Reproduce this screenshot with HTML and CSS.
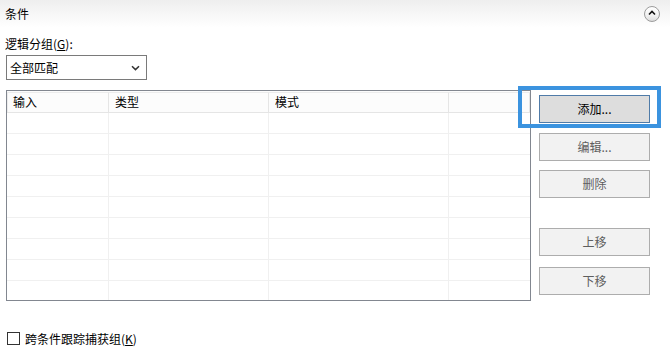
FILE: index.html
```html
<!DOCTYPE html>
<html lang="zh">
<head>
<meta charset="utf-8">
<title>条件</title>
<link rel="stylesheet" href="styles.css">
</head>
<body>
<div class="panel">
  <div class="head">
    <span class="head-title">条件</span>
    <span class="collapse">
      <svg width="8" height="6" viewBox="0 0 8 6"><path d="M1 4.5 L4 1.5 L7 4.5" fill="none" stroke="#111" stroke-width="1.6"/></svg>
    </span>
  </div>
  <div class="content">
    <div class="label">逻辑分组(<u>G</u>):</div>
    <div class="select">
      <span>全部匹配</span>
      <svg class="chev" width="9" height="6" viewBox="0 0 9 6"><path d="M1 1.2 L4.5 4.6 L8 1.2" fill="none" stroke="#333" stroke-width="1.5"/></svg>
    </div>
    <div class="main">
      <div class="grid">
        <div class="row hdr"><div class="cell">输入</div><div class="cell">类型</div><div class="cell">模式</div><div class="cell"></div></div>
        <div class="row"><div class="cell"></div><div class="cell"></div><div class="cell"></div><div class="cell"></div></div>
        <div class="row"><div class="cell"></div><div class="cell"></div><div class="cell"></div><div class="cell"></div></div>
        <div class="row"><div class="cell"></div><div class="cell"></div><div class="cell"></div><div class="cell"></div></div>
        <div class="row"><div class="cell"></div><div class="cell"></div><div class="cell"></div><div class="cell"></div></div>
        <div class="row"><div class="cell"></div><div class="cell"></div><div class="cell"></div><div class="cell"></div></div>
        <div class="row"><div class="cell"></div><div class="cell"></div><div class="cell"></div><div class="cell"></div></div>
        <div class="row"><div class="cell"></div><div class="cell"></div><div class="cell"></div><div class="cell"></div></div>
        <div class="row"><div class="cell"></div><div class="cell"></div><div class="cell"></div><div class="cell"></div></div>
        <div class="row"><div class="cell"></div><div class="cell"></div><div class="cell"></div><div class="cell"></div></div>
      </div>
      <div class="buttons">
        <div class="focus-ring"></div>
        <div class="btn btn-primary">添加...</div>
        <div class="btn gap-a">编辑...</div>
        <div class="btn gap-b">删除</div>
        <div class="btn gap-c">上移</div>
        <div class="btn gap-d">下移</div>
      </div>
    </div>
    <div class="check">
      <span class="box"></span>
      <span>跨条件跟踪捕获组(<u>K</u>)</span>
    </div>
  </div>
</div>
</body>
</html>
```

FILE: styles.css
```css
* { box-sizing: border-box; }
html, body {
  margin: 0;
  padding: 0;
  background: #ffffff;
}
body {
  width: 670px;
  height: 354px;
  overflow: hidden;
  font-family: "Noto Sans CJK SC", "Microsoft YaHei", "Liberation Sans", sans-serif;
  font-size: 12px;
  color: #000;
}
.panel {
  width: 670px;
  height: 354px;
}
.head {
  height: 28px;
  display: flex;
  align-items: center;
  justify-content: space-between;
  padding: 0 10px 0 5px;
  background: linear-gradient(to bottom, #eeeeee 0%, #f7f7f7 50%, #ffffff 100%);
}
.head-title {
  line-height: 16px;
  margin-top: -1px;
}
.collapse {
  width: 16px;
  height: 16px;
  border-radius: 50%;
  border: 1px solid #9c9c9c;
  background: linear-gradient(to bottom, #ffffff 0%, #f1f1f1 60%, #dcdcdc 100%);
  display: flex;
  align-items: center;
  justify-content: center;
  margin-top: -1px;
}
.collapse svg { margin-top: -1px; }
.content {
  padding: 8px 0 0 0;
}
.label {
  padding-left: 5px;
  line-height: 16px;
  height: 16px;
}
.select {
  margin: 3px 0 0 6px;
  width: 141px;
  height: 25px;
  border: 1px solid #7a7a7a;
  display: flex;
  align-items: center;
  justify-content: space-between;
  padding: 0 6px 0 3px;
  line-height: 16px;
}
.select .chev { margin-top: 1px; }
.main {
  margin-top: 10px;
  display: flex;
  align-items: flex-start;
}
.grid {
  margin-left: 6px;
  width: 525px;
  height: 211px;
  border: 1px solid #828790;
  overflow: hidden;
  background: #fff;
}
.row {
  display: grid;
  grid-template-columns: 102px 160px 180px 81px;
  height: 21px;
  border-bottom: 1px solid #f0f0f0;
}
.row .cell {
  border-right: 1px solid #f0f0f0;
}
.row .cell:last-child { border-right: none; }
.row.hdr {
  height: 22px;
  border-bottom: 1px solid #e5e5e5;
  background: #fcfcfc;
  padding-top: 1px;
}
.row.hdr .cell {
  border-right: 1px solid #e5e5e5;
  border-top: 1px solid #ececec;
  padding-left: 6px;
  line-height: 18px;
}
.row.hdr .cell:first-child { border-left: 1px solid #ececec; padding-left: 5px; }
.row.hdr .cell:last-child { border-right: 1px solid #e5e5e5; }
.buttons {
  position: relative;
  margin-left: 8px;
  width: 111px;
  padding-top: 5px;
  display: flex;
  flex-direction: column;
}
.focus-ring {
  position: absolute;
  left: -21px;
  top: -4px;
  width: 143px;
  height: 42px;
  border: 4px solid #3b93df;
}
.btn {
  height: 28px;
  border: 1px solid #adadad;
  background: #f2f2f2;
  color: #5e5e5e;
  display: flex;
  align-items: center;
  justify-content: center;
  line-height: 16px;
}
.btn-primary {
  border-color: #4f7ba8;
  background: #dddddd;
  color: #000;
}
.gap-a { margin-top: 10px; }
.gap-b { margin-top: 9px; }
.gap-c { margin-top: 30px; }
.gap-d { margin-top: 11px; }
.check {
  margin-top: 31px;
  padding-left: 7px;
  display: flex;
  align-items: center;
  height: 13px;
  line-height: 16px;
}
.check .box {
  width: 13px;
  height: 13px;
  border: 1px solid #333333;
  background: #fff;
  margin-right: 5px;
  flex: none;
}
u { text-decoration: underline; text-underline-offset: 1px; }
```
